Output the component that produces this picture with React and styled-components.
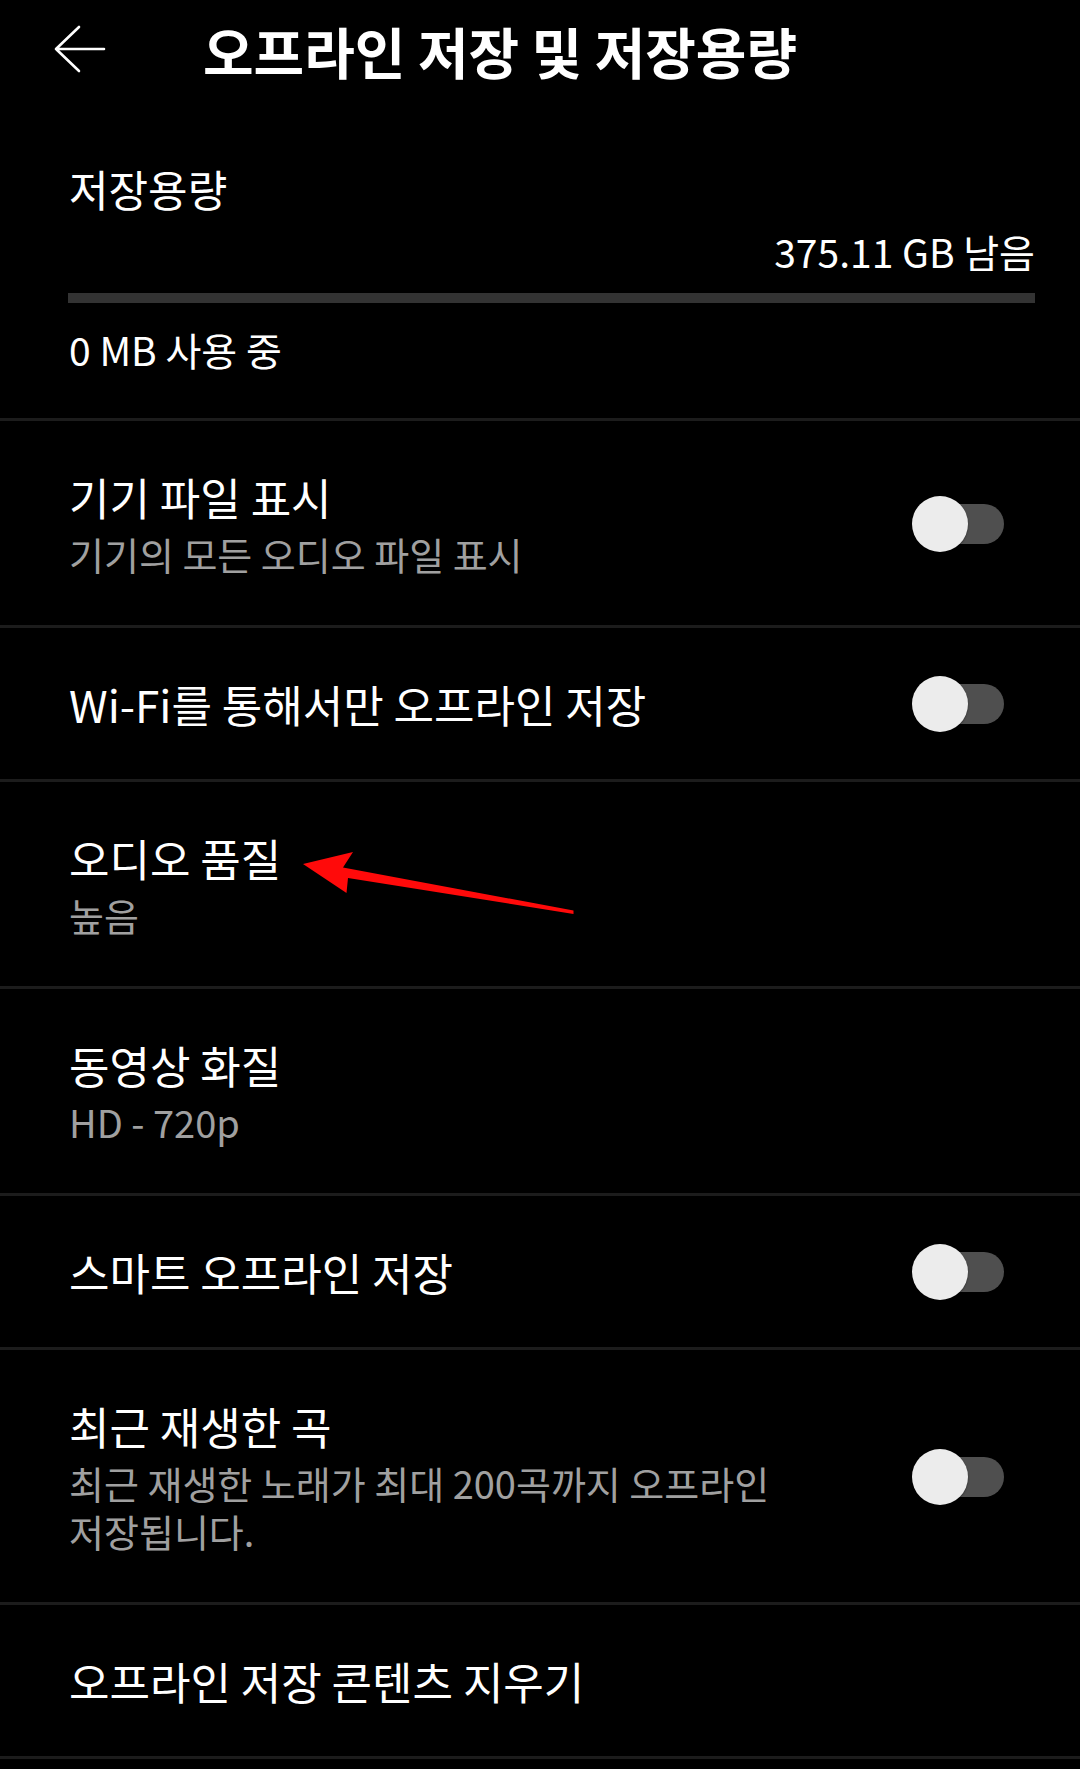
import React, { useState } from 'react';
import styled, { createGlobalStyle } from 'styled-components';

const GlobalStyle = createGlobalStyle`
  html, body {
    margin: 0;
    padding: 0;
    background: #000;
  }
  body {
    font-family: "Noto Sans CJK KR", "Noto Sans", sans-serif;
    color: #fff;
    -webkit-font-smoothing: antialiased;
  }
  #root {
    min-height: 1769px;
    background: #000;
  }
`

const settings = [
  { key: 'device', title: '기기 파일 표시', sub: '기기의 모든 오디오 파일 표시', toggle: true },
  { key: 'wifi', title: 'Wi-Fi를 통해서만 오프라인 저장', toggle: true },
  { key: 'audio', title: '오디오 품질', sub: '높음', marked: true },
  { key: 'video', title: '동영상 화질', sub: 'HD - 720p' },
  { key: 'smart', title: '스마트 오프라인 저장', toggle: true },
  { key: 'recent', title: '최근 재생한 곡', sub: '최근 재생한 노래가 최대 200곡까지 오프라인 저장됩니다.', toggle: true },
  { key: 'clear', title: '오프라인 저장 콘텐츠 지우기' },
];

function App() {
  const [toggles, setToggles] = useState({ device: false, wifi: false, smart: false, recent: false });

  function flip(key) {
    setToggles({ ...toggles, [key]: !toggles[key] });
  }

  return (
    <Page>
      <GlobalStyle />
      <Header>
        <BackButton aria-label="뒤로">
          <svg width="60" height="50" viewBox="0 0 60 50" fill="none">
            <path d="M6 24 H54 M29 2 L6 24 L29 46" stroke="#fff" strokeWidth="2.6" strokeLinecap="round" strokeLinejoin="round" />
          </svg>
        </BackButton>
        <HeaderTitle>오프라인 저장 및 저장용량</HeaderTitle>
      </Header>

      <Storage>
        <StorageLabel>저장용량</StorageLabel>
        <Remaining>375.11 GB 남음</Remaining>
        <UsageBar>
          <UsageFill style={{ width: '0%' }} />
        </UsageBar>
        <Used>0 MB 사용 중</Used>
      </Storage>

      {settings.map(item => (
        <Row key={item.key}>
          <RowText>
            <RowTitle>{item.title}</RowTitle>
            {item.sub && <RowSub>{item.sub}</RowSub>}
          </RowText>
          {item.toggle && (
            <Switch on={toggles[item.key]} onClick={() => flip(item.key)}>
              <Track />
              <Knob />
            </Switch>
          )}
          {item.marked && (
            <Pointer width="300" height="80" viewBox="0 0 300 80">
              <polygon
                points="13,16 63,4 53,19.5 283.5,62.5 283.5,66 58,30 56.5,45"
                fill="#ff0a0a"
              />
            </Pointer>
          )}
        </Row>
      ))}
    </Page>
  )
}

const Page = styled.div`
  width: 1080px;
  background: #000;
`

const Header = styled.div`
  height: 100px;
  display: flex;
  align-items: center;
  padding-left: 50px;
`

const BackButton = styled.button`
  display: flex;
  align-items: center;
  justify-content: center;
  width: 60px;
  height: 50px;
  padding: 0;
  background: transparent;
  border: none;
  cursor: pointer;
`

const HeaderTitle = styled.h1`
  margin: 0 0 0 93px;
  font-size: 55px;
  line-height: 60px;
  font-weight: 700;
  color: #fff;
`

const Storage = styled.div`
  padding: 64px 45px 47px 69px;
  border-bottom: 3px solid #1c1c1c;
`

const StorageLabel = styled.div`
  font-size: 43px;
  line-height: 48px;
  color: #fff;
`

const Remaining = styled.div`
  margin-top: 17px;
  font-size: 39px;
  line-height: 44px;
  text-align: right;
  color: #fff;
`

const UsageBar = styled.div`
  margin-top: 20px;
  margin-left: -1px;
  height: 10px;
  background: #333;
`

const UsageFill = styled.div`
  height: 100%;
  background: #fff;
`

const Used = styled.div`
  margin-top: 24px;
  font-size: 39px;
  line-height: 44px;
  color: #fff;
`

const Row = styled.div`
  position: relative;
  display: flex;
  align-items: center;
  justify-content: space-between;
  gap: 40px;
  padding: 48px 76px 47px 69px;
  border-bottom: 3px solid #1c1c1c;
`

const RowText = styled.div`
  flex: 1;
  min-width: 0;
`

const RowTitle = styled.div`
  font-size: 44px;
  line-height: 56px;
  color: #fff;
`

const RowSub = styled.div`
  margin-top: 5px;
  font-size: 38px;
  line-height: 48px;
  color: #a0a0a0;
  word-break: keep-all;
`

const Switch = styled.div`
  position: relative;
  flex: none;
  width: 92px;
  height: 56px;
  cursor: pointer;
`

const Track = styled.div`
  position: absolute;
  right: 0;
  top: 8px;
  width: 84px;
  height: 40px;
  border-radius: 20px;
  background: #4f4f4f;
`

const Knob = styled.div`
  position: absolute;
  top: 0;
  left: 0;
  width: 56px;
  height: 56px;
  border-radius: 50%;
  background: #ececec;
  box-shadow: 0 1px 2px rgba(0, 0, 0, 0.4);
`

const Pointer = styled.svg`
  position: absolute;
  left: 290px;
  top: 66px;
  pointer-events: none;
`

export default App;
